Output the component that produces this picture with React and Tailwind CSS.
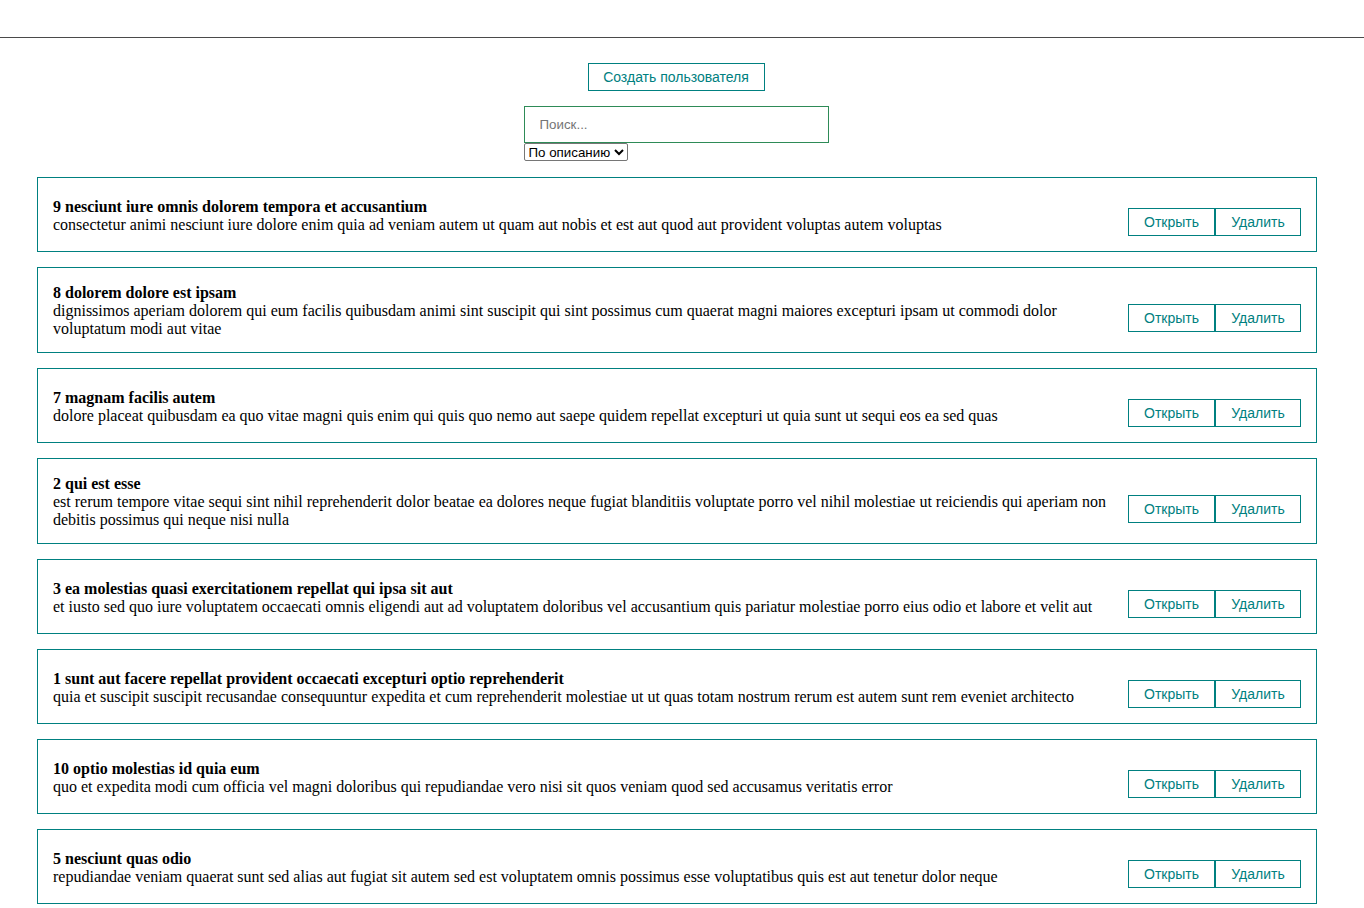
import React from "react";

const posts = [
  { id: 9, title: "nesciunt iure omnis dolorem tempora et accusantium", body: "consectetur animi nesciunt iure dolore enim quia ad veniam autem ut quam aut nobis et est aut quod aut provident voluptas autem voluptas" },
  { id: 8, title: "dolorem dolore est ipsam", body: "dignissimos aperiam dolorem qui eum facilis quibusdam animi sint suscipit qui sint possimus cum quaerat magni maiores excepturi ipsam ut commodi dolor voluptatum modi aut vitae" },
  { id: 7, title: "magnam facilis autem", body: "dolore placeat quibusdam ea quo vitae magni quis enim qui quis quo nemo aut saepe quidem repellat excepturi ut quia sunt ut sequi eos ea sed quas" },
  { id: 2, title: "qui est esse", body: "est rerum tempore vitae sequi sint nihil reprehenderit dolor beatae ea dolores neque fugiat blanditiis voluptate porro vel nihil molestiae ut reiciendis qui aperiam non debitis possimus qui neque nisi nulla" },
  { id: 3, title: "ea molestias quasi exercitationem repellat qui ipsa sit aut", body: "et iusto sed quo iure voluptatem occaecati omnis eligendi aut ad voluptatem doloribus vel accusantium quis pariatur molestiae porro eius odio et labore et velit aut" },
  { id: 1, title: "sunt aut facere repellat provident occaecati excepturi optio reprehenderit", body: "quia et suscipit suscipit recusandae consequuntur expedita et cum reprehenderit molestiae ut ut quas totam nostrum rerum est autem sunt rem eveniet architecto" },
  { id: 10, title: "optio molestias id quia eum", body: "quo et expedita modi cum officia vel magni doloribus qui repudiandae vero nisi sit quos veniam quod sed accusamus veritatis error" },
  { id: 5, title: "nesciunt quas odio", body: "repudiandae veniam quaerat sunt sed alias aut fugiat sit autem sed est voluptatem omnis possimus esse voluptatibus quis est aut tenetur dolor neque" },
  { id: 4, title: "eum et est occaecati", body: "ullam et saepe reiciendis voluptatem adipisci sit amet autem assumenda provident rerum culpa quis hic commodi nesciunt rem tenetur doloremque ipsam iure quis sunt voluptatem rerum illo velit" },
  { id: 6, title: "dolorem eum magni eos aperiam quia", body: "ut aspernatur corporis harum nihil quis provident sequi mollitia nobis aliquid molestiae perspiciatis et ea nemo ab reprehenderit accusantium quas voluptate dolores velit et doloremque molestiae" },
];

const sans = "font-['Liberation_Sans',Arial,sans-serif]";

export default function App() {
  return (
    <div className="min-h-screen bg-white font-['Liberation_Serif','Times_New_Roman',serif] text-black">
      <div className="h-[38px] border-b border-[#4a4a4a]" />
      <div className="pl-[37px] pr-[47px] flex flex-col items-center">
        <div className="mt-[25px] mr-[2px]">
          <button
            className={`h-[28px] w-[177px] px-0 border border-[#008080] text-[#008080] text-[14px] ${sans}`}
          >
            Создать пользователя
          </button>
        </div>
        <div className="mt-[15px] mr-[2px] w-[305px] flex flex-col items-start">
          <input
            placeholder="Поиск..."
            className={`w-[305px] h-[37px] border border-[#2e8b57] px-[15px] text-[13.33px] outline-none placeholder:text-[#757575] ${sans}`}
          />
          <select
            className={`h-[18px] border border-[#767676] rounded-[2px] text-[13.33px] leading-[15px] pl-0 text-black ${sans}`}
            style={{ appearance: "auto" }}
          >
            <option>По описанию</option>
            <option>По названию</option>
          </select>
        </div>
        <div className="mt-[16px] w-full flex flex-col gap-[15px] pb-[15px]">
          {posts.map((p) => (
            <div
              key={p.id}
              className="border border-[#008080] p-[15px] flex items-center"
            >
              <div className="flex-1 mr-[15px] pt-[1px] -mb-[1px] text-[16px] leading-[18px]">
                <div className="font-bold">
                  {p.id} {p.title}
                </div>
                <div>{p.body}</div>
              </div>
              <div className="mt-[15px] flex">
                <button
                  className={`h-[28px] w-[87px] border border-[#008080] bg-white text-[#008080] text-[14px] leading-[16px] ${sans}`}
                >
                  Открыть
                </button>
                <button
                  className={`h-[28px] w-[86px] border border-[#008080] bg-white text-[#008080] text-[14px] leading-[16px] ${sans}`}
                >
                  Удалить
                </button>
              </div>
            </div>
          ))}
        </div>
      </div>
    </div>
  );
}
